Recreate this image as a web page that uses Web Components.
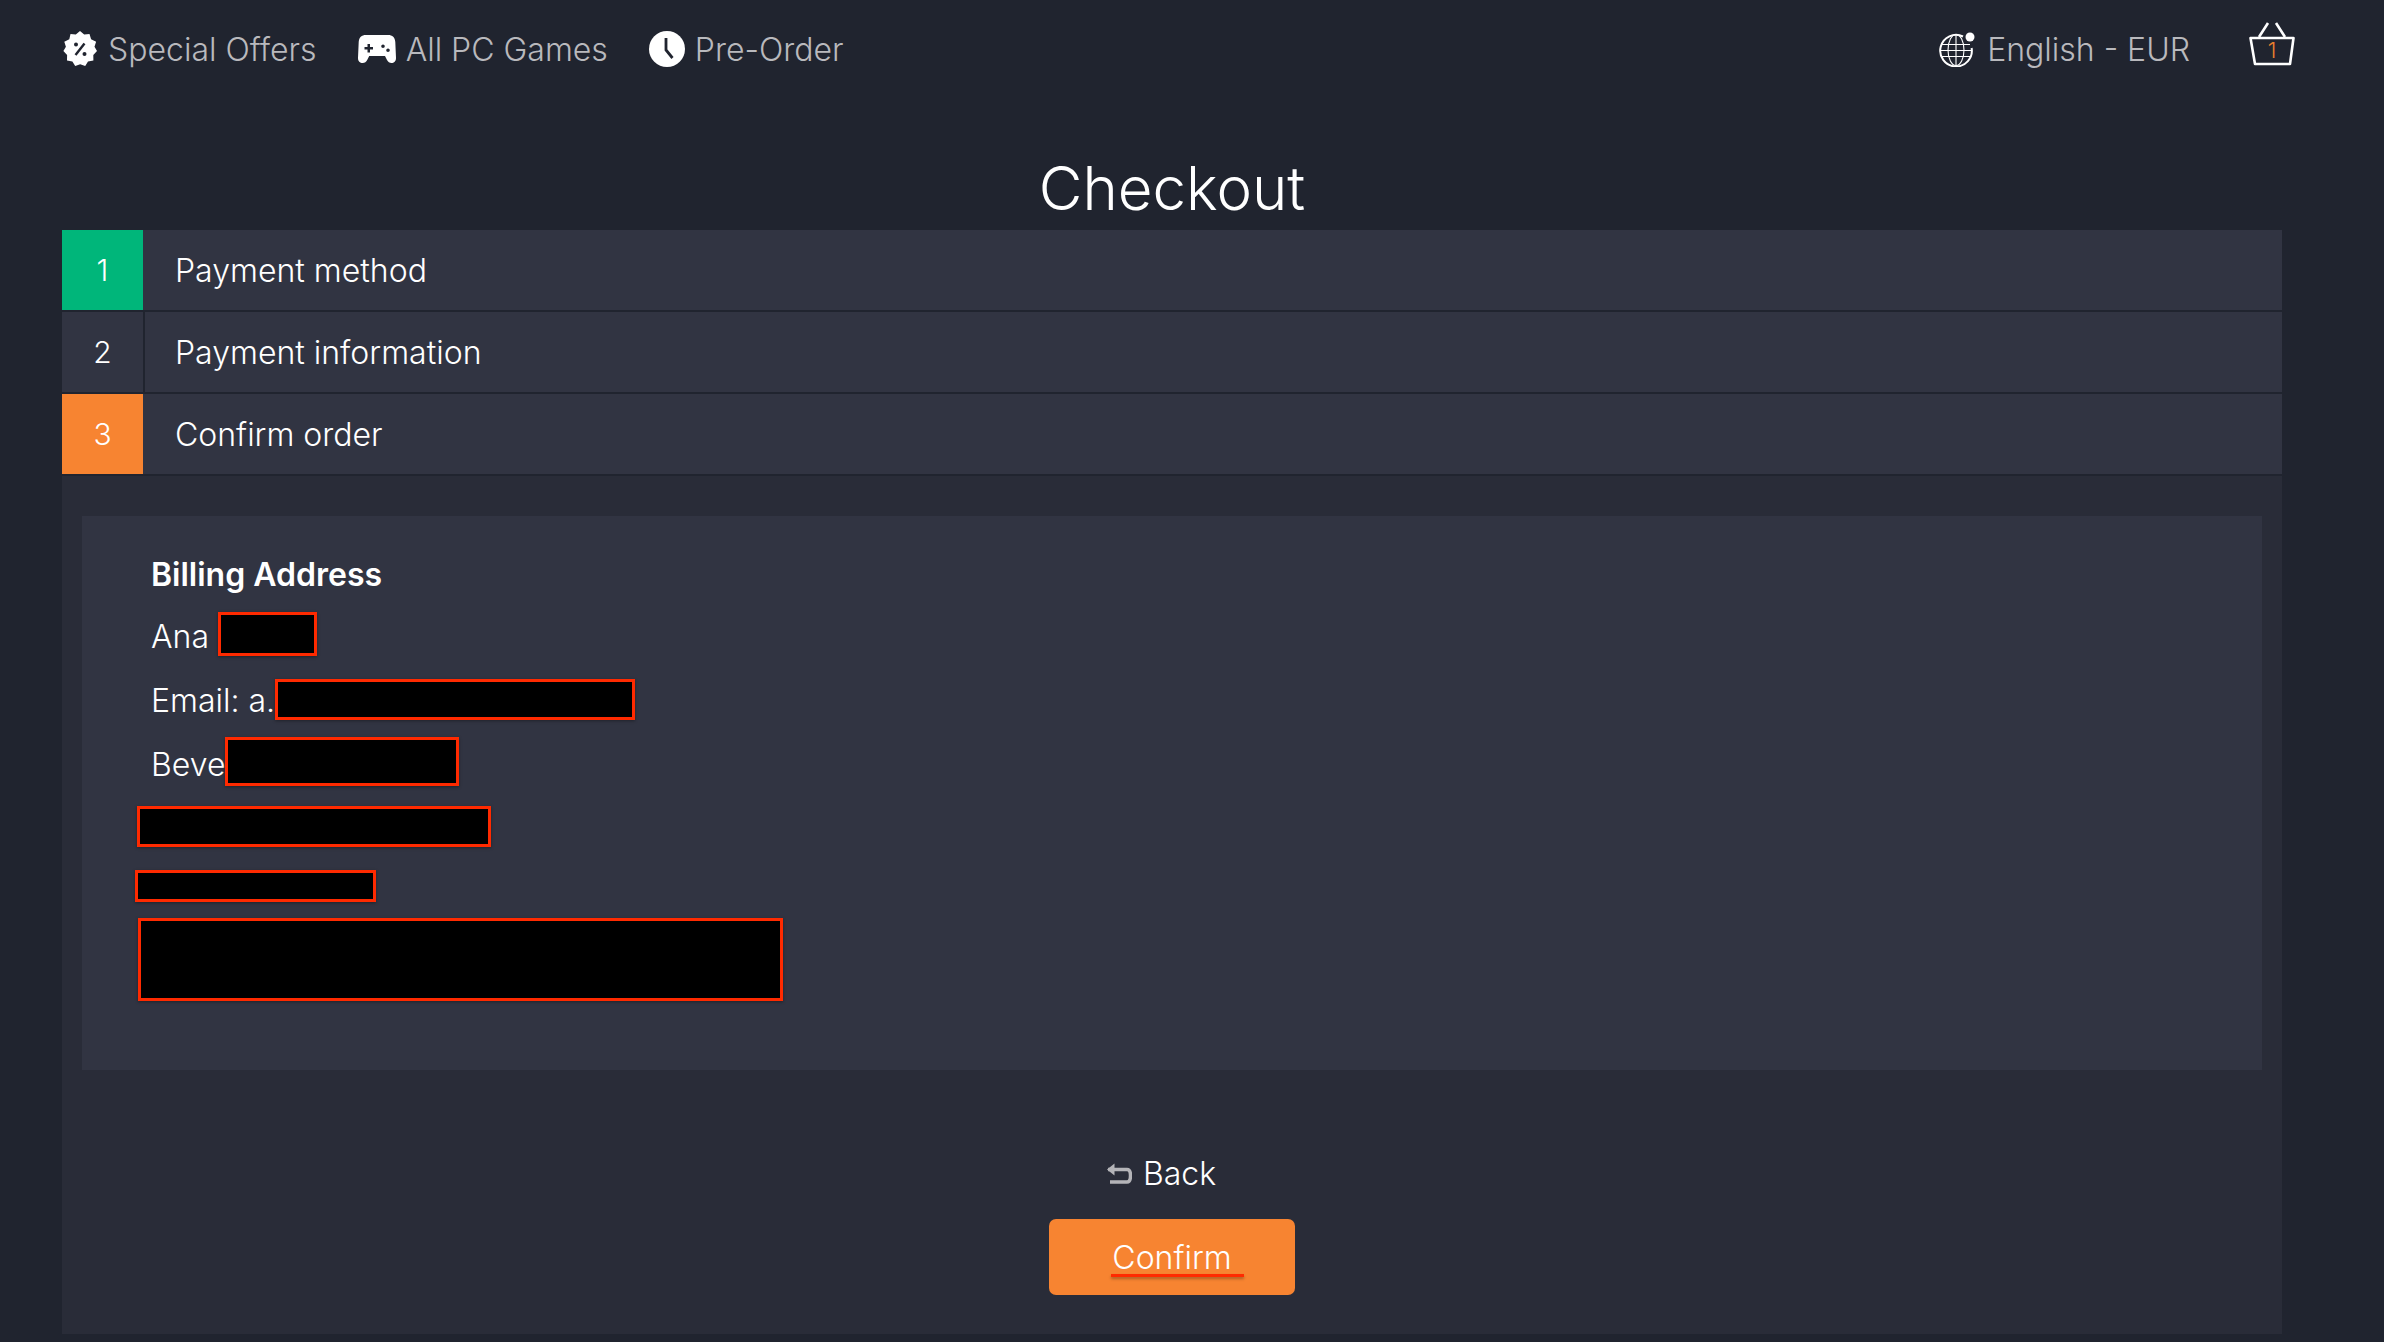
<!DOCTYPE html>
<html lang="en"><head><meta charset="utf-8"><title>Checkout</title>
<style>
html,body{margin:0;padding:0;background:#20242f;}
body{font-family:"Inter","Open Sans",sans-serif;font-weight:300;color:#fff;width:2384px;height:1342px;overflow:hidden}
</style></head><body>
<x-page>
  <x-topbar>
    <x-nav-link slot="left" icon="badge" style="--w:150px">Special Offers</x-nav-link>
    <x-nav-link slot="left" icon="pad">All PC Games</x-nav-link>
    <x-nav-link slot="left" icon="clock">Pre-Order</x-nav-link>
    <x-nav-link slot="right" icon="globe">English - EUR</x-nav-link>
    <x-basket slot="right" count="1"></x-basket>
  </x-topbar>
  <x-checkout heading="Checkout">
    <x-step slot="steps" num="1" state="done">Payment method</x-step>
    <x-step slot="steps" num="2">Payment information</x-step>
    <x-step slot="steps" num="3" state="current">Confirm order</x-step>
    <x-address>
      <span slot="title">Billing Address</span>
      <x-line>Ana <x-redact style="width:99px;height:44px;margin:-12px 0 -6px 0"></x-redact></x-line>
      <x-line>Email: a.<x-redact style="width:360px;height:41px;margin:-8px 0 -4px 0"></x-redact></x-line>
      <x-line>Beve<x-redact style="width:234px;height:49px;margin:-13px 0 -5px 0"></x-redact></x-line>
      <x-redact slot="blocks" style="width:354px;height:41px;margin:0 0 23px 2px"></x-redact>
      <x-redact slot="blocks" style="width:241px;height:32px;margin:0 0 16px 0"></x-redact>
      <x-redact slot="blocks" style="width:645px;height:83px;margin:0 0 0 3px"></x-redact>
    </x-address>
    <x-actions></x-actions>
  </x-checkout>
</x-page>
<script>
const ICONS={
badge:`<svg viewBox="0 0 36 36" width="36" height="36"><path fill="#fff" fill-rule="evenodd" d="M18 0l4.2 3.6 5.3-.6 1.6 5.3 5 2.4-1.6 5.1 2.5 4.2-3.7 3.9.1 5.5-5.4 1-2.8 4.6-5-1.7-5 1.7-2.8-4.6-5.4-1 .1-5.5L1.400 19.900l2.500-4.200L2.300 10.700l5-2.400L8.500 3l5.300.6z"/><path stroke="#20242f" stroke-width="2.4" fill="none" d="M22.500 12.500l-9 11.500"/><circle cx="14" cy="13.500" r="2" fill="#20242f"/><circle cx="22.500" cy="23" r="2" fill="#20242f"/></svg>`,
pad:`<svg viewBox="0 0 38 30" width="38" height="30"><path fill="#fff" fill-rule="evenodd" d="M8 1h22c4.500 0 7 2.500 7.300 7l.7 16c0 3.500-2 5-4.500 5-2 0-3.400-1-4.500-3l-2-4H11.200l-2 4c-1 2-2.500 3-4.500 3C2 29 0 27.500 0 24l.7-16C1 3.500 3.500 1 8 1zM9.500 10v3H6.500v2.500h3v3H12v-3h3V13h-3v-3zM25 10.500a1.800 1.800 0 1 0 0 3.600 1.800 1.800 0 0 0 0-3.600zM30 14.500a1.800 1.800 0 1 0 0 3.600 1.800 1.800 0 0 0 0-3.600z"/></svg>`,
clock:`<svg viewBox="0 0 36 36" width="36" height="36"><circle cx="18" cy="18" r="18" fill="#fff"/><path d="M17 7v12l6.500 8" fill="none" stroke="#20242f" stroke-width="2.800"/></svg>`,
globe:`<svg viewBox="0 0 38 36" width="38" height="36" fill="none" stroke="#fff"><g stroke-width="1.100"><ellipse cx="17" cy="19" rx="8" ry="15.500"/><path d="M17 3.500V34.500M2 13.500H31M1.500 19.500H32.500M3 25.500H31"/></g><path stroke-width="2" d="M24 5.500A15.800 15.800 0 1 0 32.600 17"/><circle cx="31" cy="6" r="4.500" fill="#fff" stroke="none"/></svg>`
};
function def(name,css,html,extra){
  customElements.define(name,class extends HTMLElement{
    connectedCallback(){
      if(this.shadowRoot)return;
      const r=this.attachShadow({mode:"open"});
      r.innerHTML=`<style>${css}</style>${typeof html==="function"?html(this):html}`;
    }
  });
}
def("x-page",":host{display:block}","<slot></slot>");
def("x-topbar",`:host{display:flex;justify-content:space-between;align-items:center;height:98px;padding:0 89px 0 62px;box-sizing:border-box}
 .g{display:flex;align-items:center}
 .l{gap:41px}.r{gap:59px}`,`<div class="g l"><slot name="left"></slot></div><div class="g r"><slot name="right"></slot></div>`);
def("x-nav-link",`:host{display:flex;align-items:center;gap:10px;font-size:32px;color:#b9b9bd;white-space:nowrap;font-weight:300}
 .i{display:flex;align-items:center}`,h=>`<span class="i">${ICONS[h.getAttribute("icon")]}</span><span><slot></slot></span>`);
def("x-basket",`:host{display:block;width:46px;height:44px;position:relative;top:-5px}
 svg{display:block}
 span{position:absolute;left:0;right:0;top:16px;text-align:center;color:#e87f2e;font-size:22px;line-height:24px;font-weight:300}`,
 h=>`<svg viewBox="0 0 46 44" width="46" height="44" fill="none" stroke="#fff" stroke-width="2.600"><path d="M1.500 16H44.500L41 42H6z" stroke-linejoin="round"/><path d="M10 15L19 1M36 15L27 1"/></svg><span>${h.getAttribute("count")}</span>`);
def("x-checkout",`:host{display:block;width:2220px;margin:0 0 0 62px}
 h1{margin:0;height:132px;box-sizing:border-box;padding-top:50px;text-align:center;font-weight:300;font-size:60px;line-height:80px;color:#fff;margin-top:0}
 .steps{display:flex;flex-direction:column}
 .body{background:#292c38;padding:40px 20px 0;height:858px;box-sizing:border-box;margin-top:0}`,
 h=>`<h1>${h.getAttribute("heading")}</h1><div class="steps"><slot name="steps"></slot></div><div class="body"><slot></slot></div>`);
def("x-step",`:host{display:flex;height:80px;margin-bottom:2px;background:#313442;font-size:32px;font-weight:300;color:#fff}
 .n{width:81px;flex:none;display:flex;align-items:center;justify-content:center;border-right:2px solid #20242f;font-size:30px}
 :host([state=done]) .n{background:#00b67a;border-right-color:#313442}
 :host([state=current]) .n{background:#f78431;border-right-color:#313442}
 .t{padding-left:30px;display:flex;align-items:center}`,
 h=>`<div class="n">${h.getAttribute("num")}</div><div class="t"><slot></slot></div>`);
def("x-address",`:host{display:block;background:#313442;height:554px;box-sizing:border-box;padding:36px 0 0 69px;position:relative}
 .t{font-size:32px;font-weight:600;line-height:46px;margin-bottom:16px}
 .blocks{display:flex;flex-direction:column;align-items:flex-start;margin:18px 0 0 -16px}`,
 `<div class="t"><slot name="title"></slot></div><slot></slot><div class="blocks"><slot name="blocks"></slot></div>`);
def("x-line",`:host{display:flex;align-items:center;font-size:32px;font-weight:300;line-height:46px;height:46px;margin-bottom:18px;white-space:pre}`,`<slot></slot>`);
def("x-redact",`:host{display:inline-block;box-sizing:border-box;background:#000;border:3px solid #ff2a00;box-shadow:0 1px 3px rgba(0,0,0,.35);flex:none}`,``);
def("x-actions",`:host{display:flex;flex-direction:column;align-items:center;padding-top:84px}
 .back{display:flex;align-items:center;gap:11px;font-size:32px;line-height:40px;font-weight:300;color:#fff;margin-left:-22px}
 button{all:unset;box-sizing:border-box;display:flex;align-items:center;justify-content:center;width:246px;height:76px;border-radius:7px;background:#f78431;color:#fff;font:300 32px "Inter",sans-serif;margin-top:25px;position:relative}
 u{text-decoration:none;position:absolute;left:62px;width:133px;top:55px;height:3px;background:#ff2a00;box-shadow:0 2px 3px rgba(0,0,0,.3)}`,
 `<div class="back"><svg viewBox="0 0 26 22" width="26" height="22" fill="none" stroke="#b4b4b8" stroke-width="3.500"><path d="M2 6.500H21C24 6.500 24.500 9 24.500 12.500 24.500 16.500 24 19 21 19H4"/><path fill="#b4b4b8" stroke="none" d="M1 6.500L8.500.5V12.500z"/></svg><span>Back</span></div><button>Confirm<u></u></button>`);
</script>
</body></html>
